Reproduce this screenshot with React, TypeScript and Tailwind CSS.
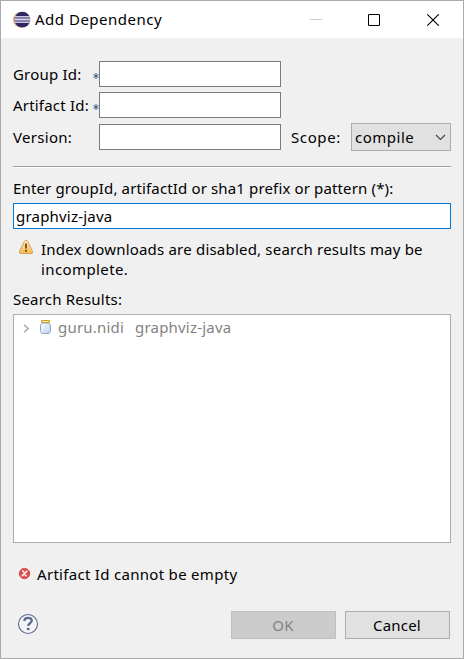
import React from "react";

function EclipseIcon() {
  return (
    <svg width="20" height="20" viewBox="0 0 20 20" className="shrink-0">
      <circle cx="9.800" cy="9.700" r="7.800" fill="#f4a23c" />
      <circle cx="10.700" cy="9.700" r="7.900" fill="#f7e3cd" />
      <circle cx="11.300" cy="9.700" r="7.900" fill="#302663" />
      <path d="M4 6.500h15M3.500 9.500h15.700M4 12.500h15" stroke="#c9c7dd" strokeWidth="1" />
      <path d="M3.700 8h15.400M3.700 11h15.400" stroke="#8682ab" strokeWidth="2" />
      <path d="M3.500 9.500h15.700" stroke="#dddcea" strokeWidth="1" />
    </svg>
  );
}

function WarningIcon() {
  return (
    <svg width="16" height="16" viewBox="0 0 16 16" className="shrink-0">
      <defs>
        <linearGradient id="warn" x1="0" y1="0" x2="0" y2="1">
          <stop offset="0" stopColor="#fff0b4" />
          <stop offset="1" stopColor="#f8b94c" />
        </linearGradient>
      </defs>
      <path d="M8 1.2c.8 0 1.3.5 1.7 1.3l4.6 9.4c.8 1.7.2 2.6-1.4 2.6H3.1c-1.6 0-2.2-.9-1.4-2.6l4.6-9.4C6.7 1.7 7.2 1.2 8 1.2Z" fill="url(#warn)" stroke="#d89b62" />
      <path d="M8 4.500v5" stroke="#6b4716" strokeWidth="1.800" />
      <path d="M7.100 10.800h1.800v1.900H7.100z" fill="#6b4716" />
    </svg>
  );
}

function JarIcon() {
  return (
    <svg width="13" height="16" viewBox="0 0 13 16" className="shrink-0">
      <defs>
        <linearGradient id="jar" x1="0" y1="0" x2="1" y2="1">
          <stop offset="0" stopColor="#ffffff" />
          <stop offset="1" stopColor="#b9d0ef" />
        </linearGradient>
      </defs>
      <path d="M3 4h7c0 1 1.500 1.300 1.500 3v4.500c0 1.800-.8 3-2.300 3H3.800c-1.500 0-2.300-1.200-2.300-3V7c0-1.700 1.500-2 1.500-3Z" fill="url(#jar)" stroke="#93a5c3" />
      <path d="M2.500 1.500h8v2h-8z" fill="#fff1b5" stroke="#c99b24" />
    </svg>
  );
}

function ErrorIcon() {
  return (
    <svg width="13" height="13" viewBox="0 0 13 13" className="shrink-0">
      <circle cx="6.500" cy="6.500" r="6.400" fill="#fff" />
      <circle cx="6.500" cy="6.500" r="5.300" fill="#dc5050" stroke="#c63b41" strokeWidth=".8" />
      <path d="M4 3.900c1.600-.4 1.900.7 2.400 2.500.5 1.800.9 2.800 2.400 2.400M9.300 3.700 3.800 9.300" fill="none" stroke="#fff" strokeWidth="1.400" />
    </svg>
  );
}

function HelpIcon() {
  return (
    <svg width="22" height="22" viewBox="0 0 22 22" className="shrink-0">
      <circle cx="11" cy="11" r="9.500" fill="#f5f5f6" stroke="#5b6b8c" strokeWidth="1.100" />
      <path d="M7.300 8c0-2.300 1.500-3.200 3.700-3.200 2.300 0 3.800 1 3.800 2.800 0 2.700-3.600 2.600-3.600 5.400" fill="none" stroke="#586b90" strokeWidth="2.200" />
      <path d="M9.900 14.900h2.600v2.200H9.900z" fill="#586b90" />
    </svg>
  );
}

function TitleBar() {
  return (
    <header className="flex h-[37px] shrink-0 items-center bg-white pl-[10px] text-black">
      <EclipseIcon />
      <h1 className="mb-[2px] ml-[4px] flex-1 text-[15px] tracking-[0.5px]">Add Dependency</h1>
      <svg width="12" height="12" viewBox="0 0 12 12" className="mr-[46px]">
        <path d="M0 5.500h12" stroke="#ccc" />
      </svg>
      <svg width="12" height="12" viewBox="0 0 12 12" className="mr-[47px]">
        <path d="M.5.5h11v11H.5z" fill="none" stroke="#000" />
      </svg>
      <svg width="12" height="12" viewBox="0 0 12 12" className="mr-[24px]">
        <path d="m.3.3 11.400 11.400M11.700.3.3 11.700" stroke="#000" strokeWidth="1.100" />
      </svg>
    </header>
  );
}

function Field({ label, required }: { label: string; required?: boolean }) {
  return (
    <div className="flex h-[26px] items-center">
      <label className="w-[79px] whitespace-nowrap">{label}</label>
      <span className="flex w-[7px] justify-end">
        {required && (
          <svg width="6" height="6" viewBox="0 0 6 6" className="mt-[4px] shrink-0">
            <path d="M3 0v6M.4 1.500l5.200 3M5.600 1.500.4 4.500" stroke="#3c5a80" strokeWidth="1" />
          </svg>
        )}
      </span>
      <div className="h-[26px] w-[182px] border border-[#7a7a7a] bg-white" />
    </div>
  );
}

export default function App() {
  return (
    <div className="flex h-[659px] w-[464px] flex-col border border-[#aaa] bg-[#f0f0f0] font-['Noto_Sans','Open_Sans',sans-serif] text-[15px] leading-5 tracking-[0.2px] text-black">
      <TitleBar />
      <main className="flex flex-1 flex-col pt-[23px] pr-[12px] pl-[12px]">
        <Field label="Group Id:" required />
        <div className="mt-[5px] tracking-[0.2px]">
          <Field label="Artifact Id:" required />
        </div>
        <div className="mt-[5px] flex h-[28px] items-center">
          <div className="tracking-[0.3px]">
            <Field label="Version:" />
          </div>
          <span className="ml-[10px] w-[60px] tracking-[0.6px]">Scope:</span>
          <div className="flex h-[28px] w-[100px] items-center justify-between border border-[#adadad] bg-[#e1e1e1] pr-[4px] pl-[3px] tracking-[0.5px]">
            <span>compile</span>
            <svg width="11" height="7" viewBox="0 0 11 7">
              <path d="m1 1 4.500 4.500L10 1" fill="none" stroke="#444" strokeWidth="1.100" />
            </svg>
          </div>
        </div>
        <div className="mt-[15px] h-[2px] border-t border-b border-t-[#a0a0a0] border-b-white" />
        <p className="mt-[10px] tracking-[0.14px] whitespace-nowrap">Enter groupId, artifactId or sha1 prefix or pattern (*):</p>
        <div className="mt-[5px] flex h-[26px] items-center border border-[#0078d7] bg-white pl-[2px]">graphviz-java</div>
        <div className="mt-[10px] flex">
          <div className="ml-[5px] w-[23px]">
            <WarningIcon />
          </div>
          <p className="whitespace-nowrap">
            Index downloads are disabled, search results may be
            <br />
            <span className="tracking-[0.4px]">incomplete.</span>
          </p>
        </div>
        <p className="mt-[10px]">Search Results:</p>
        <div className="mt-[5px] h-[229px] border border-[#abadb3] bg-white pt-[2px] text-[#838383]">
          <div className="flex h-[20px] items-center">
            <svg width="7" height="9" viewBox="0 0 7 9" className="mt-[2px] ml-[9px]">
              <path d="m1 .7 4.200 3.800L1 8.300" fill="none" stroke="#a6a6a6" strokeWidth="1.500" />
            </svg>
            <span className="mr-[6px] ml-[9px]">
              <JarIcon />
            </span>
            <span className="w-[77px]">guru.nidi</span>
            <span>graphviz-java</span>
          </div>
        </div>
        <div className="mt-[22px] flex h-[20px] items-center">
          <span className="mb-[3px] ml-[5px] w-[19px]">
            <ErrorIcon />
          </span>
          <span className="mb-[2px] tracking-[0.3px]">Artifact Id cannot be empty</span>
        </div>
        <div className="mt-[26px] flex h-[28px] items-center">
          <span className="mb-[2px] ml-[4px] flex-1">
            <HelpIcon />
          </span>
          <button disabled className="mr-[9px] h-[28px] w-[105px] border border-[#bfbfbf] bg-[#ccc] pr-[1px] text-[#838383]">OK</button>
          <button className="mr-[1px] h-[28px] w-[105px] border border-[#adadad] bg-[#e1e1e1] pr-[1px] tracking-[0.2px]">Cancel</button>
        </div>
      </main>
    </div>
  );
}
